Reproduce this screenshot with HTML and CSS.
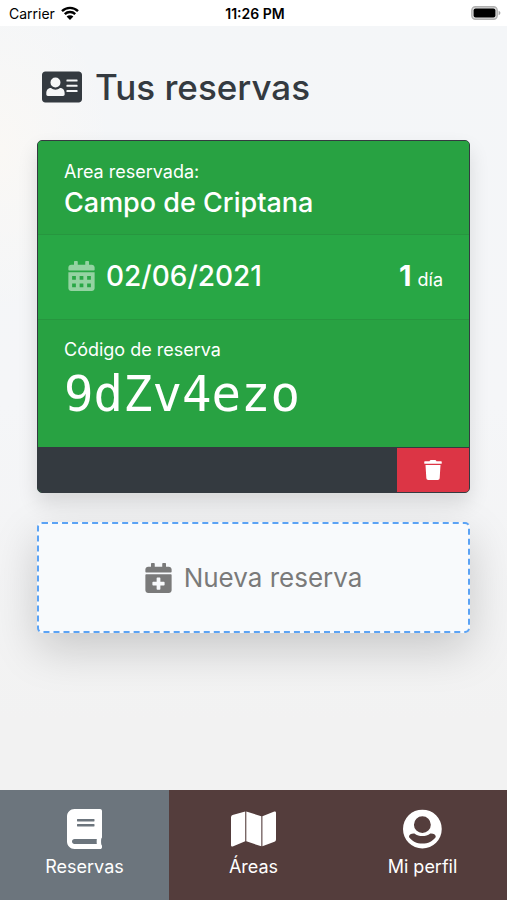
FILE: index.html
```html
<!DOCTYPE html>
<html lang="es">
<head>
  <meta charset="UTF-8" />
  <meta name="viewport" content="width=device-width, initial-scale=1.0"/>
  <title>Tus reservas</title>
  <link rel="stylesheet" href="styles.css">
</head>
<body>
  <div class="status-bar">
    <div class="carrier">
      <span>Carrier</span>
      <svg class="wifi" viewBox="0 0 18 14" aria-hidden="true">
        <path d="M1 5.2a11.4 11.4 0 0 1 16 0M3.8 8.1a7.4 7.4 0 0 1 10.4 0" fill="none" stroke="#000" stroke-width="2.4"/>
        <path d="M9 14l-3.4-3.5a4.9 4.9 0 0 1 6.8 0z"/>
      </svg>
    </div>
    <span class="time">11:26 PM</span>
    <div class="battery-wrap">
      <svg class="battery" viewBox="0 0 30 14" aria-hidden="true">
        <rect x="0.8" y="0.8" width="25.4" height="12.4" rx="3.6" fill="#ddd" stroke="#b0b0b0" stroke-width="1.4"/>
        <rect x="2.6" y="2.4" width="21.8" height="9.2" rx="2"/>
        <path d="M27.6 4.8c2.4.8 2.4 3.6 0 4.4z" fill="#a6a6a6"/>
      </svg>
    </div>
  </div>

  <main class="content">
    <h1>
      <svg class="title-icon" viewBox="0 0 576 512" aria-hidden="true"><path fill-rule="evenodd" d="M528 32H48C21.500 32 0 53.500 0 80v352c0 26.500 21.500 48 48 48h480c26.500 0 48-21.500 48-48V80c0-26.500-21.500-48-48-48zM194 118a72 72 0 1 1 0 144 72 72 0 1 1 0-144zM130 270c36 32 92 32 128 0 38 0 68 28 68 72v22c0 12-10 20-22 20H84c-12 0-22-8-22-20v-22c0-44 30-72 68-72zM360 148h144q8 0 8 8v14q0 8-8 8H360q-8 0-8-8v-14q0-8 8-8zM360 222h144q8 0 8 8v14q0 8-8 8H360q-8 0-8-8v-14q0-8 8-8zM360 298h144q8 0 8 8v14q0 8-8 8H360q-8 0-8-8v-14q0-8 8-8z"/></svg>
      Tus reservas
    </h1>

    <article class="card">
      <div class="card-header">
        <p>Area reservada:</p>
        <h2>Campo de Criptana</h2>
      </div>
      <div class="card-body">
        <div class="date">
          <svg class="icon" viewBox="0 0 448 512" aria-hidden="true"><path fill-rule="evenodd" d="M436 160H12c-6.600 0-12-5.400-12-12v-36c0-26.500 21.500-48 48-48h48V12c0-6.600 5.400-12 12-12h40c6.600 0 12 5.400 12 12v52h128V12c0-6.600 5.400-12 12-12h40c6.600 0 12 5.400 12 12v52h48c26.500 0 48 21.500 48 48v36c0 6.600-5.400 12-12 12zM0 192h448v272c0 26.500-21.500 48-48 48H48c-26.500 0-48-21.500-48-48zM64 256h64v64H64zM192 256h64v64h-64zM320 256h64v64h-64zM64 384h64v64H64zM192 384h64v64h-64zM320 384h64v64h-64z"/></svg>
          <span>02/06/2021</span>
        </div>
        <div class="days"><strong>1</strong> <span>día</span></div>
      </div>
      <div class="card-code">
        <p>Código de reserva</p>
        <code>9dZv4ezo</code>
      </div>
      <div class="card-footer">
        <button type="button" class="delete-button" aria-label="Eliminar">
          <svg viewBox="0 0 448 512" aria-hidden="true"><path d="M432 32H312l-9.400-18.700A24 24 0 0 0 281.100 0H166.800a23.720 23.720 0 0 0-21.400 13.300L136 32H16A16 16 0 0 0 0 48v32a16 16 0 0 0 16 16h416a16 16 0 0 0 16-16V48a16 16 0 0 0-16-16zM53.200 467a48 48 0 0 0 47.900 45h245.800a48 48 0 0 0 47.900-45L416 128H32z"/></svg>
        </button>
      </div>
    </article>

    <button type="button" class="new-button">
      <svg class="icon" viewBox="0 0 448 512" aria-hidden="true"><path d="M436 160H12c-6.600 0-12-5.400-12-12v-36c0-26.500 21.500-48 48-48h48V12c0-6.600 5.400-12 12-12h40c6.600 0 12 5.400 12 12v52h128V12c0-6.600 5.400-12 12-12h40c6.600 0 12 5.400 12 12v52h48c26.500 0 48 21.500 48 48v36c0 6.600-5.400 12-12 12zM12 192h424c6.600 0 12 5.400 12 12v260c0 26.500-21.500 48-48 48H48c-26.500 0-48-21.500-48-48V204c0-6.600 5.400-12 12-12zm316 140c0-6.600-5.400-12-12-12h-60v-60c0-6.600-5.400-12-12-12h-40c-6.600 0-12 5.400-12 12v60h-60c-6.600 0-12 5.400-12 12v40c0 6.600 5.400 12 12 12h60v60c0 6.600 5.400 12 12 12h40c6.600 0 12-5.400 12-12v-60h60c6.600 0 12-5.400 12-12v-40z"/></svg>
      <span>Nueva reserva</span>
    </button>
  </main>

  <nav class="tab-bar">
    <a href="#" class="active">
      <svg viewBox="0 0 448 512" aria-hidden="true"><path d="M448 360V24c0-13.300-10.700-24-24-24H96C43 0 0 43 0 96v320c0 53 43 96 96 96h328c13.300 0 24-10.700 24-24v-16c0-7.500-3.500-14.300-8.900-18.700-4.200-15.400-4.200-59.300 0-74.700 5.400-4.300 8.900-11.100 8.900-18.600zM128 134c0-3.300 2.700-6 6-6h212c3.300 0 6 2.700 6 6v20c0 3.300-2.700 6-6 6H134c-3.300 0-6-2.700-6-6v-20zm0 64c0-3.300 2.700-6 6-6h212c3.300 0 6 2.700 6 6v20c0 3.300-2.700 6-6 6H134c-3.300 0-6-2.700-6-6v-20zm253.400 250H96c-17.700 0-32-14.300-32-32 0-17.600 14.400-32 32-32h285.400c-1.900 17.100-1.900 46.900 0 64z"/></svg>
      <span>Reservas</span>
    </a>
    <a href="#">
      <svg viewBox="0 0 576 512" aria-hidden="true"><path d="M0 106v358c0 11.320 11.430 19.060 21.940 14.860L182 414V32L20.120 78A32.006 32.006 0 0 0 0 106zM196 414l192 64V92L196 32v382zM554.060 33.160L402 92v386l153.880-60A31.996 31.996 0 0 0 576 388V48.020c0-11.320-11.430-19.060-21.940-14.860z"/></svg>
      <span>Áreas</span>
    </a>
    <a href="#">
      <svg viewBox="0 0 496 512" aria-hidden="true"><path fill-rule="evenodd" d="M248 8a248 248 0 1 0 0 496 248 248 0 1 0 0-496zM248 92a108 108 0 1 1 0 216 108 108 0 1 1 0-216zM76 357c4-34 30-46 70-44 60 44 144 44 204 0 40-2 66 10 70 44-40 56-100 84-172 84s-132-28-172-84z"/></svg>
      <span>Mi perfil</span>
    </a>
  </nav>
</body>
</html>
```

FILE: styles.css
```css
* {
  box-sizing: border-box;
}
body {
  margin: 0;
  min-height: 100vh;
  display: flex;
  flex-direction: column;
  font-family: Inter, "Liberation Sans", sans-serif;
  font-size: 18px;
  color: #343a40;
  background:
    radial-gradient(ellipse 110px 160px at 0 150px, #faf8f5, rgba(250, 248, 245, 0)),
    linear-gradient(#f4f6f8, #f5f6f8 45%, #f2f2f2 80%);
}
h1, h2, p {
  margin: 0;
}
svg {
  display: block;
  fill: currentColor;
}
.status-bar {
  display: grid;
  grid-template-columns: 1fr auto 1fr;
  align-items: center;
  height: 26px;
  padding: 0 6px 0 9px;
  background: white;
  color: black;
  font-size: 14px;
}
.carrier {
  display: flex;
  align-items: center;
  gap: 6px;
}
.wifi {
  width: 18px;
  height: 14px;
}
.time {
  font-weight: 600;
}
.battery-wrap {
  display: flex;
  justify-content: flex-end;
}
.battery {
  width: 30px;
  height: 14px;
}
.content {
  flex: 1;
  padding: 37px;
}
h1 {
  display: flex;
  align-items: center;
  gap: 13px;
  margin-bottom: 29px;
  padding-left: 5px;
  font-size: 35px;
  font-weight: 500;
  line-height: 48px;
}
.title-icon {
  width: 40px;
  height: 36px;
}
.icon {
  width: 27px;
  height: 30px;
}
.card {
  margin-bottom: 29px;
  border: 1px solid #343a40;
  border-radius: 5px;
  overflow: hidden;
  background: #28a745;
  color: white;
  box-shadow: 0 10px 20px rgba(0, 0, 0, 0.12);
}
.card-header {
  padding: 20px 26px 13px;
  border-bottom: 1px solid #27963f;
  background: #28a242;
}
.card-header p,
.card-code p {
  line-height: 22px;
}
.card-header h2 {
  margin-top: 2px;
  font-size: 27px;
  font-weight: 500;
  line-height: 36px;
}
.card-body {
  display: flex;
  align-items: center;
  justify-content: space-between;
  padding: 23px 26px 25px 30px;
}
.date {
  display: flex;
  align-items: center;
  gap: 11px;
  font-size: 28px;
  font-weight: 500;
  line-height: 36px;
}
.date .icon {
  opacity: 0.5;
}
.days {
  display: flex;
  align-items: baseline;
  gap: 6px;
  line-height: 24px;
}
.days strong {
  font-size: 29px;
  font-weight: 700;
  line-height: 36px;
}
.card-code {
  padding: 19px 26px 21px;
  border-top: 1px solid #27963f;
  background: #28a242;
}
.card-code code {
  display: block;
  margin-top: 3px;
  font-family: "DejaVu Sans Mono", monospace;
  font-size: 49px;
  line-height: 62px;
}
.card-footer {
  display: flex;
  justify-content: flex-end;
  border-top: 1px solid #343a40;
  background: #343a40;
}
.delete-button {
  display: flex;
  align-items: center;
  justify-content: center;
  width: 72px;
  height: 44px;
  padding: 0;
  border: none;
  background: #dc3545;
  color: white;
  cursor: pointer;
}
.delete-button svg {
  width: 18px;
  height: 20px;
}
.new-button {
  display: flex;
  align-items: center;
  justify-content: center;
  gap: 12px;
  width: 100%;
  height: 111px;
  border: 2px dashed #5ba3f5;
  border-radius: 5px;
  background: #f8fafc;
  color: #7a7a7a;
  font-family: inherit;
  font-size: 26px;
  box-shadow: 0 16px 45px rgba(0, 0, 0, 0.18);
  cursor: pointer;
}
.tab-bar {
  display: grid;
  grid-template-columns: repeat(3, 1fr);
  background: #543d3c;
}
.tab-bar a {
  display: flex;
  flex-direction: column;
  align-items: center;
  gap: 6px;
  height: 110px;
  padding-top: 19px;
  color: white;
  text-decoration: none;
  line-height: 24px;
}
.tab-bar .active {
  background: #6c757d;
}
.tab-bar svg {
  height: 40px;
}
```
